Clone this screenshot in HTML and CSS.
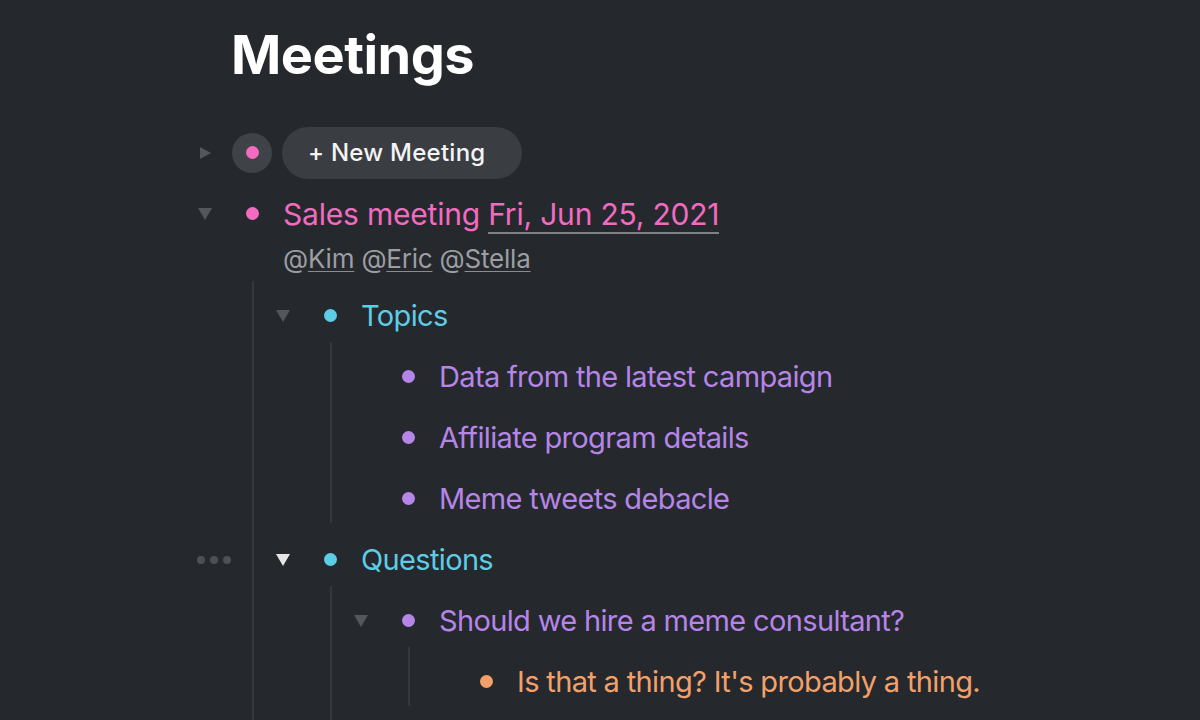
FILE: index.html
```html
<!DOCTYPE html>
<html>
<head>
<meta charset="utf-8">
<link rel="stylesheet" href="styles.css">
</head>
<body>
<div class="page">
  <h1 class="title">Meetings</h1>

  <div class="row lvl0">
    <span class="toggle"><svg width="14" height="14" viewBox="0 0 14 14"><polygon points="2,1 13,7 2,13" fill="#53565b"/></svg></span>
    <span class="bullet"><span class="circle"><span class="dot pink"></span></span></span>
    <span class="pill">+ New Meeting</span>
  </div>

  <div class="item">
    <div class="row">
      <span class="toggle"><svg width="16" height="14" viewBox="0 0 16 14"><polygon points="1,1 15,1 8,13" fill="#53565b"/></svg></span>
      <span class="bullet"><span class="dot pink"></span></span>
      <span class="text pink-t">Sales meeting <span class="date">Fri, Jun 25, 2021</span></span>
    </div>
    <div class="mentions">@<u>Kim</u> @<u>Eric</u> @<u>Stella</u></div>
    <div class="children cont">
      <div class="item">
        <div class="row">
          <span class="toggle"><svg width="16" height="14" viewBox="0 0 16 14"><polygon points="1,1 15,1 8,13" fill="#53565b"/></svg></span>
          <span class="bullet"><span class="dot cyan"></span></span>
          <span class="text cyan-t">Topics</span>
        </div>
        <div class="children">
          <div class="row">
            <span class="toggle"></span>
            <span class="bullet"><span class="dot purple"></span></span>
            <span class="text purple-t">Data from the latest campaign</span>
          </div>
          <div class="row">
            <span class="toggle"></span>
            <span class="bullet"><span class="dot purple"></span></span>
            <span class="text purple-t">Affiliate program details</span>
          </div>
          <div class="row">
            <span class="toggle"></span>
            <span class="bullet"><span class="dot purple"></span></span>
            <span class="text purple-t">Meme tweets debacle</span>
          </div>
        </div>
      </div>
      <div class="item">
        <div class="row">
          <span class="handle"><i></i><i></i><i></i></span>
          <span class="toggle"><svg width="16" height="14" viewBox="0 0 16 14"><polygon points="1,1 15,1 8,13" fill="#e6e6e6"/></svg></span>
          <span class="bullet"><span class="dot cyan"></span></span>
          <span class="text cyan-t">Questions</span>
        </div>
        <div class="children cont">
          <div class="item">
            <div class="row">
              <span class="toggle"><svg width="16" height="14" viewBox="0 0 16 14"><polygon points="1,1 15,1 8,13" fill="#53565b"/></svg></span>
              <span class="bullet"><span class="dot purple"></span></span>
              <span class="text purple-t">Should we hire a meme consultant?</span>
            </div>
            <div class="children">
              <div class="row">
                <span class="toggle"></span>
                <span class="bullet"><span class="dot orange"></span></span>
                <span class="text orange-t narrow">Is that a thing? It's probably a thing.</span>
              </div>
            </div>
          </div>
        </div>
      </div>
    </div>
  </div>
</div>
</body>
</html>
```

FILE: styles.css
```css
html, body {
  margin: 0;
  padding: 0;
  background: #25282c;
  height: 100%;
  overflow: hidden;
}
body {
  font-family: Inter, "Noto Sans", sans-serif;
  color: #fff;
}
.page {
  padding: 23px 0 0 190px;
}
.title {
  margin: 0 0 35px 41px;
  font-size: 54px;
  line-height: 64px;
  font-weight: 700;
  letter-spacing: -0.5px;
  color: #ffffff;
}
.row {
  position: relative;
  display: flex;
  align-items: center;
  height: 61px;
}
.toggle {
  width: 30px;
  display: flex;
  justify-content: center;
  align-items: center;
}
.toggle svg { display: block; }
.bullet {
  width: 40px;
  height: 40px;
  margin-left: 12px;
  margin-right: 11px;
  display: flex;
  justify-content: center;
  align-items: center;
}
.circle {
  width: 40px;
  height: 40px;
  border-radius: 50%;
  background: #3f4246;
  display: flex;
  justify-content: center;
  align-items: center;
}
.dot {
  width: 13px;
  height: 13px;
  border-radius: 50%;
}
.pink { background: #f16bc0; }
.cyan { background: #5dcde6; }
.purple { background: #b585e8; }
.orange { background: #f3a06b; }
.pill {
  box-sizing: border-box;
  width: 240px;
  height: 52px;
  border-radius: 26px;
  background: #3a3d41;
  padding-left: 26px;
  display: flex;
  align-items: center;
  font-size: 24px;
  font-weight: 500;
  letter-spacing: 0.25px;
  color: #f4f4f4;
  margin-left: -1px;
}
.text {
  font-size: 29px;
  letter-spacing: -0.65px;
  white-space: nowrap;
}
.pink-t { color: #f16bc0; font-size: 30px; letter-spacing: -0.2px; }
.cyan-t { color: #5dcde6; }
.purple-t { color: #b585e8; }
.orange-t { color: #f3a06b; }
.narrow { letter-spacing: -0.65px; font-size: 29px; }
.date {
  border-bottom: 2px solid #7d8084;
}
.mentions {
  height: 30px;
  line-height: 30px;
  padding-left: 93px;
  margin-bottom: 11px;
  font-size: 26px;
  letter-spacing: -0.2px;
  color: #9c9ea2;
}
.mentions u {
  text-decoration-color: #8a8c90;
  text-decoration-thickness: 1px;
  text-underline-offset: 3px;
}
.children {
  position: relative;
  margin-left: 62px;
  padding-left: 16px;
}
.children::before {
  content: "";
  position: absolute;
  left: 0;
  top: -4px;
  bottom: 6px;
  width: 2px;
  background: #34373b;
}
.children.cont::before {
  bottom: -40px;
}
.handle {
  position: absolute;
  left: -71px;
  top: 50%;
  margin-top: -4px;
  display: flex;
  gap: 5px;
}
.handle i {
  display: block;
  width: 8px;
  height: 8px;
  border-radius: 50%;
  background: #4d5054;
}
```
